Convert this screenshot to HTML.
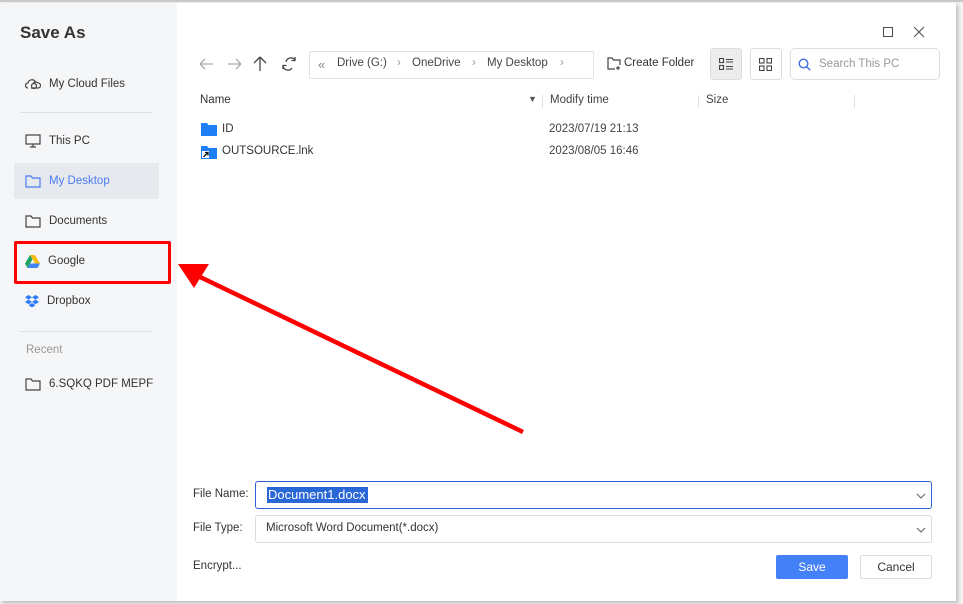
<!DOCTYPE html>
<html><head><meta charset="utf-8"><style>
*{box-sizing:border-box;margin:0;padding:0}
body{width:963px;height:604px;overflow:hidden;background:#f4f4f4;font-family:"Liberation Sans",sans-serif;position:relative;color:#333}
.dlg{position:absolute;left:0;top:3px;width:956px;height:598px;background:#fff;box-shadow:2px 2px 4px rgba(0,0,0,.25)}
.side{position:absolute;left:0;top:0;width:177px;height:598px;background:#f5f6f8}
.title{position:absolute;left:20px;top:20px;font-size:17px;font-weight:bold;color:#333}
.it{position:absolute;left:14px;width:145px;height:36px;font-size:11.5px;color:#333;display:flex;align-items:center;padding-left:11px}
.it svg{margin-right:8px}
.sel{background:#e6e9ee;color:#4b7cf3;border-radius:2px}
.hr{position:absolute;left:20px;width:133px;height:1px;background:#dde0e5}
.t{position:absolute;font-size:11.5px;white-space:nowrap}
.box{position:absolute;border:1px solid #ddd;border-radius:3px}
</style></head><body>
<div class="dlg">
<div class="side">
<div class="title">Save As</div>
<div class="it" style="top:63px"><svg width="16" height="12" viewBox="0 0 16 12" fill="none" stroke="#444" stroke-width="1.2"><path d="M3 10a2.5 2.5 0 0 1 0-5 4 4 0 0 1 7.5-1M6 10h7a2.5 2.5 0 0 0 0-5 3 3 0 0 0-5 1"/><circle cx="9" cy="8" r="2.5"/></svg>My Cloud Files</div>
<div class="hr" style="top:109px"></div>
<div class="it" style="top:120px"><svg width="16" height="14" viewBox="0 0 16 14" fill="none" stroke="#444" stroke-width="1.2"><rect x="1" y="1" width="14" height="9"/><path d="M5 13h6M8 10v3"/></svg>This PC</div>
<div class="it sel" style="top:160px"><svg width="16" height="13" viewBox="0 0 16 13" fill="none" stroke="#4b7cf3" stroke-width="1.2"><path d="M1 1h5l1.5 2H15v9H1z"/></svg>My Desktop</div>
<div class="it" style="top:200px"><svg width="16" height="13" viewBox="0 0 16 13" fill="none" stroke="#444" stroke-width="1.2"><path d="M1 1h5l1.5 2H15v9H1z"/></svg>Documents</div>
<div class="it" style="top:240px"><svg width="15" height="13" viewBox="0 0 15 13"><path d="M5 0h5l5 8.5h-5z" fill="#f8bc10"/><path d="M5 0l2.5 4.3L2.5 13 0 8.5z" fill="#1fa463"/><path d="M2.5 13l2.5-4.5h10L12.5 13z" fill="#4285f4"/></svg>Google</div>
<div class="it" style="top:280px"><svg width="14" height="13" viewBox="0 0 14 13" fill="#2d7cf6"><path d="M3.5 0L0 2.3l3.5 2.3L7 2.3zM10.5 0L7 2.3l3.5 2.3L14 2.3zM0 7l3.5 2.3L7 7 3.5 4.6zM14 7l-3.5 2.3L7 7l3.5-2.4zM3.5 10.2L7 12.5l3.5-2.3L7 8z"/></svg>Dropbox</div>
<div class="hr" style="top:328px"></div>
<div class="t" style="left:26px;top:341px;color:#999">Recent</div>
<div class="it" style="top:363px"><svg width="16" height="13" viewBox="0 0 16 13" fill="none" stroke="#444" stroke-width="1.2"><path d="M1 1h5l1.5 2H15v9H1z"/></svg>6.SQKQ PDF MEPF</div>
</div>
<svg style="position:absolute;left:197px;top:51px" width="110" height="20" viewBox="0 0 110 20" fill="none" stroke-width="1.3"><path d="M3 10h13M3 10l5-5M3 10l5 5" stroke="#aaa"/><path d="M31 10h13M44 10l-5-5M44 10l-5 5" stroke="#aaa"/><path d="M63 3v14M63 3l-6 6M63 3l6 6" stroke="#444"/><path d="M98 6a5 5 0 0 0-9 2M86 12a5 5 0 0 0 9 2M98 3v3.5h-3.5M86 15v-3.5h3.5" stroke="#444"/></svg>
<div class="box" style="left:309px;top:48px;width:285px;height:28px;border-color:#e2e2e2;border-radius:2px"></div>
<div class="t" style="left:318px;top:54px;color:#888;font-size:13px">«</div>
<div class="t" style="left:337px;top:54px;color:#444">Drive (G:)</div>
<div class="t" style="left:397px;top:54px;color:#999">›</div>
<div class="t" style="left:412px;top:54px;color:#444">OneDrive</div>
<div class="t" style="left:472px;top:54px;color:#999">›</div>
<div class="t" style="left:487px;top:54px;color:#444">My Desktop</div>
<div class="t" style="left:560px;top:54px;color:#999">›</div>
<svg style="position:absolute;left:607px;top:54px" width="14" height="13" viewBox="0 0 14 13" fill="none" stroke="#444" stroke-width="1.2"><path d="M8 12H1V1h4l1.5 2H13v5M11 9v4M9 11h4"/></svg>
<div class="t" style="left:624px;top:54px;color:#333">Create Folder</div>
<div class="box" style="left:710px;top:45px;width:32px;height:32px;background:#ededed;border-color:#ddd"></div>
<svg style="position:absolute;left:719px;top:55px" width="14" height="12" viewBox="0 0 14 12" fill="none" stroke="#444" stroke-width="1.1"><rect x="0.5" y="0.5" width="4" height="4"/><rect x="0.5" y="7.5" width="4" height="4"/><path d="M7 1.5h7M7 4h7M7 8.5h7M7 11h7"/></svg>
<div class="box" style="left:750px;top:45px;width:32px;height:32px"></div>
<svg style="position:absolute;left:759px;top:55px" width="13" height="13" viewBox="0 0 13 13" fill="none" stroke="#444" stroke-width="1.1"><rect x="0.5" y="0.5" width="4.5" height="4.5"/><rect x="8" y="0.5" width="4.5" height="4.5"/><rect x="0.5" y="8" width="4.5" height="4.5"/><rect x="8" y="8" width="4.5" height="4.5"/></svg>
<div class="box" style="left:790px;top:45px;width:150px;height:32px;border-radius:5px"></div>
<svg style="position:absolute;left:798px;top:55px" width="13" height="13" viewBox="0 0 13 13" fill="none" stroke="#3d6fe0" stroke-width="1.4"><circle cx="5.5" cy="5.5" r="4.3"/><path d="M8.7 8.7l3.5 3.5"/></svg>
<div class="t" style="left:819px;top:55px;color:#999">Search This PC</div>
<svg style="position:absolute;left:880px;top:22px" width="48" height="14" viewBox="0 0 48 14" fill="none" stroke="#555" stroke-width="1.1"><rect x="3.5" y="2.5" width="9" height="9"/><path d="M34 2l10 10M44 2L34 12"/></svg>
<div class="t" style="left:200px;top:91px;color:#333">Name</div>
<div class="t" style="left:528px;top:91px;color:#555;font-size:9px">▼</div>
<div style="position:absolute;left:542px;top:92px;width:1px;height:13px;background:#e0e0e0"></div>
<div class="t" style="left:550px;top:91px;color:#444">Modify time</div>
<div style="position:absolute;left:698px;top:92px;width:1px;height:13px;background:#e0e0e0"></div>
<div class="t" style="left:706px;top:91px;color:#444">Size</div>
<div style="position:absolute;left:854px;top:92px;width:1px;height:13px;background:#e0e0e0"></div>
<svg style="position:absolute;left:201px;top:119px" width="16" height="14" viewBox="0 0 16 14"><path d="M0 1h6l1.5 2H16v11H0z" fill="#1e7ff5"/></svg>
<div class="t" style="left:222px;top:120px">ID</div>
<div class="t" style="left:549px;top:120px;color:#444">2023/07/19 21:13</div>
<svg style="position:absolute;left:201px;top:142px" width="16" height="14" viewBox="0 0 16 14"><path d="M0 1h6l1.5 2H16v11H0z" fill="#1e7ff5"/><rect x="1" y="6" width="7" height="7" fill="#fff"/><path d="M2.5 12L7 7.5M4 7.5h3v3" stroke="#111" stroke-width="1.3" fill="none"/></svg>
<div class="t" style="left:222px;top:142px">OUTSOURCE.lnk</div>
<div class="t" style="left:549px;top:142px;color:#444">2023/08/05 16:46</div>
<div class="t" style="left:193px;top:485px;color:#333">File Name:</div>
<div class="box" style="left:255px;top:478px;width:677px;height:28px;border-color:#2d5fd6"></div>
<div class="t" style="left:267px;top:484px;background:#2a67d6;color:#fff;padding:0 2px 0 1px;font-size:13px;line-height:16px">Document1.docx</div>
<div class="t" style="left:193px;top:519px;color:#333">File Type:</div>
<div class="box" style="left:255px;top:512px;width:677px;height:28px"></div>
<div class="t" style="left:266px;top:519px;color:#333">Microsoft Word Document(*.docx)</div>
<svg style="position:absolute;left:916px;top:489px" width="10" height="44" viewBox="0 0 10 44" fill="none" stroke="#666" stroke-width="1.1"><path d="M1 2l4 4 4-4M1 36l4 4 4-4"/></svg>
<div class="t" style="left:193px;top:557px;color:#333">Encrypt...</div>
<div style="position:absolute;left:776px;top:552px;width:72px;height:24px;background:#4480f7;border-radius:2px;color:#fff;font-size:12px;text-align:center;line-height:24px">Save</div>
<div class="box" style="left:860px;top:552px;width:72px;height:24px;border-radius:2px;color:#333;font-size:12px;text-align:center;line-height:22px">Cancel</div>
</div>
<div style="position:absolute;left:0;top:0;width:963px;height:2px;background:#c8c8c8"></div>
<div style="position:absolute;left:14px;top:241px;width:157px;height:43px;border:3px solid #f00;border-radius:2px"></div>
<svg style="position:absolute;left:0;top:0" width="963" height="604"><path d="M198 276L523 432" stroke="#f00" stroke-width="4.5"/><path d="M178 264L209 264L194 288z" fill="#f00"/></svg>
</body></html>
